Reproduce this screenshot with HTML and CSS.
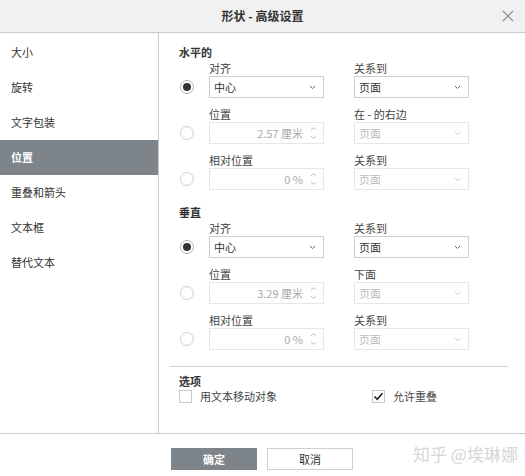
FILE: index.html
```html
<!DOCTYPE html>
<html lang="zh">
<head>
<meta charset="utf-8">
<link rel="stylesheet" href="styles.css">
</head>
<body>
<div class="dialog">
  <div class="header">
    <div class="title">形状 - 高级设置</div>
    <svg class="close" width="12" height="12" viewBox="0 0 12 12"><path d="M1 1L11 11M11 1L1 11" stroke="#8a8a8a" stroke-width="1.2" fill="none"/></svg>
  </div>
  <div class="main">
    <div class="sidebar">
      <div class="nav">大小</div>
      <div class="nav">旋转</div>
      <div class="nav">文字包装</div>
      <div class="nav active">位置</div>
      <div class="nav">重叠和箭头</div>
      <div class="nav">文本框</div>
      <div class="nav">替代文本</div>
    </div>
    <div class="content">
      <div class="sec-title">水平的</div>
      <div class="row">
        <div class="radio-cell"><span class="radio checked"></span></div>
        <div class="field"><div class="label">对齐</div><div class="select"><span>中心</span><svg class="chev" width="7" height="5" viewBox="0 0 7 5"><path d="M1 1L3.5 3.5L6 1" stroke="#666" fill="none"/></svg></div></div>
        <div class="field"><div class="label">关系到</div><div class="select"><span>页面</span><svg class="chev" width="7" height="5" viewBox="0 0 7 5"><path d="M1 1L3.5 3.5L6 1" stroke="#666" fill="none"/></svg></div></div>
      </div>
      <div class="row">
        <div class="radio-cell"><span class="radio"></span></div>
        <div class="field"><div class="label">位置</div><div class="input disabled"><span>2.57 厘米</span><svg class="spin" width="7" height="14" viewBox="0 0 7 14"><path d="M1 4L3.5 1.5L6 4M1 10L3.5 12.5L6 10" stroke="#bbb" fill="none"/></svg></div></div>
        <div class="field"><div class="label">在 - 的右边</div><div class="select disabled"><span>页面</span><svg class="chev" width="7" height="5" viewBox="0 0 7 5"><path d="M1 1L3.5 3.5L6 1" stroke="#ccc" fill="none"/></svg></div></div>
      </div>
      <div class="row">
        <div class="radio-cell"><span class="radio"></span></div>
        <div class="field"><div class="label">相对位置</div><div class="input disabled"><span>0 %</span><svg class="spin" width="7" height="14" viewBox="0 0 7 14"><path d="M1 4L3.5 1.5L6 4M1 10L3.5 12.5L6 10" stroke="#bbb" fill="none"/></svg></div></div>
        <div class="field"><div class="label">关系到</div><div class="select disabled"><span>页面</span><svg class="chev" width="7" height="5" viewBox="0 0 7 5"><path d="M1 1L3.5 3.5L6 1" stroke="#ccc" fill="none"/></svg></div></div>
      </div>

      <div class="sec-title second">垂直</div>
      <div class="row">
        <div class="radio-cell"><span class="radio checked"></span></div>
        <div class="field"><div class="label">对齐</div><div class="select"><span>中心</span><svg class="chev" width="7" height="5" viewBox="0 0 7 5"><path d="M1 1L3.5 3.5L6 1" stroke="#666" fill="none"/></svg></div></div>
        <div class="field"><div class="label">关系到</div><div class="select"><span>页面</span><svg class="chev" width="7" height="5" viewBox="0 0 7 5"><path d="M1 1L3.5 3.5L6 1" stroke="#666" fill="none"/></svg></div></div>
      </div>
      <div class="row">
        <div class="radio-cell"><span class="radio"></span></div>
        <div class="field"><div class="label">位置</div><div class="input disabled"><span>3.29 厘米</span><svg class="spin" width="7" height="14" viewBox="0 0 7 14"><path d="M1 4L3.5 1.5L6 4M1 10L3.5 12.5L6 10" stroke="#bbb" fill="none"/></svg></div></div>
        <div class="field"><div class="label">下面</div><div class="select disabled"><span>页面</span><svg class="chev" width="7" height="5" viewBox="0 0 7 5"><path d="M1 1L3.5 3.5L6 1" stroke="#ccc" fill="none"/></svg></div></div>
      </div>
      <div class="row">
        <div class="radio-cell"><span class="radio"></span></div>
        <div class="field"><div class="label">相对位置</div><div class="input disabled"><span>0 %</span><svg class="spin" width="7" height="14" viewBox="0 0 7 14"><path d="M1 4L3.5 1.5L6 4M1 10L3.5 12.5L6 10" stroke="#bbb" fill="none"/></svg></div></div>
        <div class="field"><div class="label">关系到</div><div class="select disabled"><span>页面</span><svg class="chev" width="7" height="5" viewBox="0 0 7 5"><path d="M1 1L3.5 3.5L6 1" stroke="#ccc" fill="none"/></svg></div></div>
      </div>

      <div class="sep"></div>
      <div class="sec-title opts-title">选项</div>
      <div class="options">
        <div class="opt first"><span class="checkbox"></span><span>用文本移动对象</span></div>
        <div class="opt"><span class="checkbox"><svg width="11" height="11" viewBox="0 0 11 11"><path d="M1.5 5.5L4.2 8.3L9.5 2.2" stroke="#222" stroke-width="1.6" fill="none"/></svg></span><span>允许重叠</span></div>
      </div>
    </div>
  </div>
  <div class="footer">
    <div class="btn primary">确定</div>
    <div class="btn">取消</div>
    <div class="watermark">知乎 @埃琳娜</div>
  </div>
</div>
</body>
</html>
```

FILE: styles.css
```css
* { box-sizing: border-box; }
html, body { margin: 0; padding: 0; background: #fff; }
body {
  font-family: "Noto Sans CJK SC", "Liberation Sans", sans-serif;
  font-size: 11px;
  color: #444;
}
.dialog { width: 525px; height: 476px; display: flex; flex-direction: column; }
.header {
  height: 33px;
  background: #f1f1f1;
  border-bottom: 1px solid #cbcbcb;
  display: flex;
  align-items: center;
  justify-content: center;
  position: relative;
}
.title { font-size: 12px; font-weight: bold; color: #333; line-height: 16px; margin-left: 0; }
.close { position: absolute; right: 11px; top: 10px; }
.main { height: 401px; display: flex; border-bottom: 1px solid #cbcbcb; }
.sidebar { width: 159px; border-right: 1px solid #cbcbcb; padding-top: 2px; }
.nav { height: 35px; line-height: 35px; padding-left: 11px; color: #333; font-size: 11px; }
.nav.active { background: #7d858b; color: #fff; font-weight: bold; }
.content { flex: 1; padding: 12px 0 0 20px; }
.sec-title { font-weight: bold; color: #333; line-height: 15px; height: 15px; }
.sec-title.second { margin-top: 15px; }
.row { display: flex; align-items: flex-end; margin-bottom: 8px; }
.radio-cell { width: 30px; height: 22px; display: flex; align-items: center; }
.radio {
  width: 14px; height: 14px; border-radius: 50%;
  border: 1px solid #d0d0d0; background: #fff; display: block; margin-left: 1px;
  position: relative;
}
.radio.checked { border-color: #b5b5b5; }
.radio.checked::after {
  content: ""; position: absolute; left: 2px; top: 2px; width: 8px; height: 8px;
  border-radius: 50%; background: #333;
}
.field { width: 115px; margin-right: 30px; }
.label { line-height: 16px; height: 16px; color: #444; white-space: nowrap; }
.select, .input {
  height: 22px; border: 1px solid #cfcfcf; display: flex; align-items: center;
  padding: 0 0 0 4px; position: relative; color: #333;
}
.select span { flex: 1; }
.chev { margin-right: 7px; }
.select.disabled { border-color: #e6e6e6; color: #bbb; }
.input.disabled { border-color: #e6e6e6; color: #aaa; padding-right: 0; }
.input span { flex: 1; text-align: right; padding-right: 7px; }
.spin { margin-right: 6px; }
.sep { height: 1px; background: #d5d5d5; margin: 16px 17px 0 -9px; }
.opts-title { margin-top: 7px; }
.options { display: flex; align-items: center; height: 14px; }
.opt { display: flex; align-items: center; gap: 8px; color: #444; }
.opt.first { width: 193px; }
.checkbox {
  width: 13px; height: 13px; border: 1px solid #c8c8c8; background: #fff;
  display: flex; align-items: center; justify-content: center;
}
.footer { flex: 1; display: flex; align-items: flex-start; padding: 14px 0 0 171px; gap: 10px; position: relative; }
.btn {
  width: 86px; height: 22px; border: 1px solid #cfcfcf; background: #fff;
  text-align: center; line-height: 20px; color: #333; font-size: 11px;
}
.btn.primary { background: #7d858b; border-color: #7d858b; color: #fff; font-weight: bold; }
.watermark {
  position: absolute; left: 413px; top: 8px; font-size: 17px; line-height: 24px;
  color: #d6d6d6; white-space: nowrap;
}
```
